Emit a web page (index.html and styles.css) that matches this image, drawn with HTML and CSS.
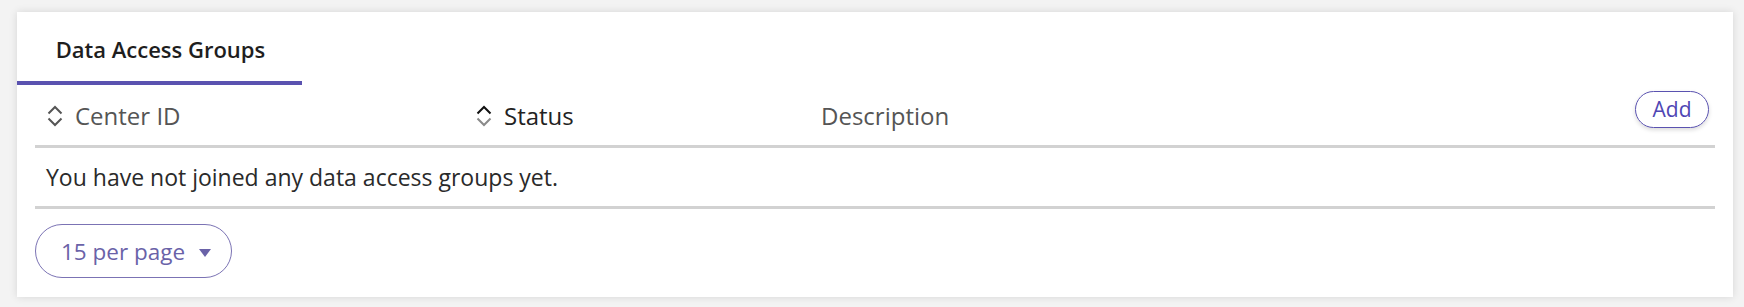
FILE: index.html
```html
<!DOCTYPE html>
<html lang="en">
<head>
	<meta charset="UTF-8">
	<title>Data Access Groups</title>
	<link rel="stylesheet" href="styles.css">
</head>
<body>
	<section class="card">
		<div class="tabs">
			<a href="#" class="tab tab-active">Data Access Groups</a>
		</div>
		<div class="table">
			<div class="table-head">
				<div class="col col-id">
					<svg class="sort" width="16" height="22" viewBox="0 0 16 22">
						<polyline class="sort-up" points="1.5,8.5 8,2 14.5,8.5"/>
						<polyline class="sort-down" points="1.5,13.5 8,20 14.5,13.5"/>
					</svg>
					<span>Center ID</span>
				</div>
				<div class="col col-status sorted">
					<svg class="sort" width="16" height="22" viewBox="0 0 16 22">
						<polyline class="sort-up" points="1.5,8.5 8,2 14.5,8.5"/>
						<polyline class="sort-down" points="1.5,13.5 8,20 14.5,13.5"/>
					</svg>
					<span>Status</span>
				</div>
				<div class="col col-desc">
					<span>Description</span>
				</div>
				<div class="col col-action">
					<a href="#" class="btn-add">Add</a>
				</div>
			</div>
			<div class="table-row empty">
				You have not joined any data access groups yet.
			</div>
		</div>
		<div class="pager">
			<a href="#" class="per-page">15 per page <span class="caret"></span></a>
		</div>
	</section>
</body>
</html>
```

FILE: styles.css
```css
* {
	padding: 0;
	margin: 0;
	box-sizing: border-box;
}
a {
	text-decoration: none;
}
body {
	background: #f3f3f3;
	font-family: "Open Sans", "Noto Sans", sans-serif;
	padding: 12px 11px 10px 17px;
}
.card {
	background: #fff;
	height: 285px;
	box-shadow: 0 0 8px rgba(0,0,0,0.12);
}
.tabs {
	display: flex;
}
.tab {
	display: block;
	width: 285px;
	padding: 22px 0 17px 2px;
	font-size: 22px;
	line-height: 30px;
	font-weight: 600;
	color: #1e1e1e;
	text-align: center;
	border-bottom: 4px solid #5a52b0;
}
.table {
	margin: 0 18px;
}
.table-head {
	display: flex;
	align-items: center;
	height: 63px;
	border-bottom: 3px solid #d2d2d2;
	font-size: 24px;
	color: #555;
}
.col {
	display: flex;
	align-items: center;
	padding-left: 12px;
}
.col-id {
	width: 429px;
}
.col-status {
	width: 346px;
}
.col-desc {
	flex: 1;
	padding-left: 11px;
}
.col-action {
	padding-right: 6px;
	margin-top: -12px;
}
.sort {
	margin-right: 12px;
	margin-top: 1px;
}
.sort polyline {
	fill: none;
	stroke: #555;
	stroke-width: 2;
}
.sorted {
	color: #222;
}
.sorted .sort-up {
	stroke: #111;
}
.sorted .sort-down {
	stroke: #8a8a8a;
}
.btn-add {
	display: block;
	width: 74px;
	height: 37px;
	line-height: 34px;
	text-align: center;
	font-size: 21px;
	color: #4f46b4;
	border: 1.5px solid #5a52b0;
	border-radius: 19px;
	box-shadow: 0 2px 4px rgba(0,0,0,0.15);
}
.table-row {
	height: 61px;
	border-bottom: 3px solid #d2d2d2;
	padding: 14px 0 0 11px;
	font-size: 23px;
	line-height: 30px;
	color: #2a2a2a;
}
.pager {
	padding: 15px 18px 0;
}
.per-page {
	display: inline-flex;
	align-items: center;
	width: 197px;
	height: 54px;
	padding-left: 25px;
	font-size: 22.5px;
	color: #6a62a8;
	border: 1px solid #7b73b4;
	border-radius: 27px;
}
.caret {
	display: inline-block;
	width: 0;
	height: 0;
	margin-left: 14px;
	margin-top: 3px;
	border-left: 6.5px solid transparent;
	border-right: 6.5px solid transparent;
	border-top: 8px solid #6a62a8;
}
```
